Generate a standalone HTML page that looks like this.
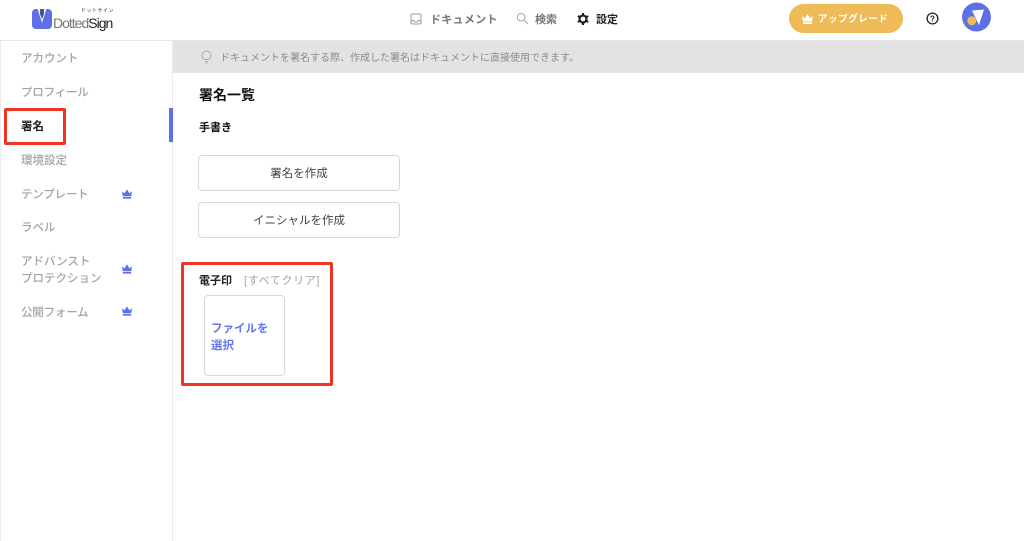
<!DOCTYPE html>
<html lang="ja">
<head>
<meta charset="utf-8">
<style>
html,body{margin:0;padding:0;background:#fff}
body{width:1024px;height:541px;overflow:hidden;position:relative;font-family:"Liberation Sans","Noto Sans CJK JP",sans-serif;color:#222;filter:blur(.35px)}
.a{position:absolute;white-space:nowrap}
.nav{font-size:11.5px;line-height:14px;color:#a3a3a3;left:21px;letter-spacing:0;font-weight:500}
.btn{position:absolute;left:198px;width:200px;height:34px;border:1px solid #d8d8d8;border-radius:4px;text-align:center;font-size:11.5px;line-height:36px;color:#444;background:#fff}
.red{position:absolute;border:3px solid #ee3524;border-radius:2px;box-sizing:border-box}
</style>
</head>
<body>
<div class="a" style="left:0;top:40px;width:1024px;height:1px;background:#e8e8e8"></div>
<div class="a" style="left:0;top:41px;width:1px;height:500px;background:#ececec"></div>
<div class="a" style="left:172px;top:41px;width:1px;height:500px;background:#ececec"></div>
<div class="a" style="left:173px;top:41px;width:851px;height:32px;background:#e3e3e3"></div>

<svg class="a" style="left:32px;top:9px" width="20" height="20" viewBox="0 0 20 20">
<rect x="0" y="0" width="20" height="20" rx="4" fill="#5f6fe6"/>
<path d="M5.500 0L10 14L14.500 0Z" fill="#e9edf8"/>
<path d="M8 0h4v5l-2 5-2-5z" fill="#4a5690"/>
</svg>
<div class="a" style="left:53px;top:15px;font-size:14px;line-height:17px;letter-spacing:-1px;color:#777;font-weight:400">Dotted<span style="color:#222">Sign</span></div>
<div class="a" style="left:81px;top:8px;font-size:5px;line-height:7px;letter-spacing:.5px;color:#333">ドットサイン</div>

<svg class="a" style="left:410px;top:13px" width="12" height="12" viewBox="0 0 12 12" fill="none" stroke="#999" stroke-width="1"><rect x="1" y="1" width="10" height="10" rx="1.500"/><path d="M1 7.500h2.800c.4 1.200 1.200 1.500 2.200 1.500s1.800-.3 2.200-1.500H11"/></svg>
<div class="a" style="left:430px;top:13px;font-size:11px;line-height:14px;color:#777;font-weight:700;letter-spacing:.3px">ドキュメント</div>
<svg class="a" style="left:516px;top:12px" width="13" height="13" viewBox="0 0 13 13" fill="none" stroke="#aaa" stroke-width="1.100"><circle cx="5.200" cy="5.200" r="3.800"/><path d="M8 8l4 4"/></svg>
<div class="a" style="left:535px;top:13px;font-size:11px;line-height:14px;color:#777;font-weight:700">検索</div>
<svg class="a" style="left:577px;top:13px" width="12" height="12" viewBox="0 0 12 12"><circle cx="6" cy="6" r="3.500" fill="none" stroke="#222" stroke-width="2.200"/><g stroke="#222" stroke-width="2"><path d="M6 0v2M6 10v2M.8 3l1.700 1M9.500 8l1.700 1M.8 9l1.700-1M9.500 4l1.700-1"/></g></svg>
<div class="a" style="left:596px;top:13px;font-size:11px;line-height:14px;color:#222;font-weight:700">設定</div>

<div class="a" style="left:789px;top:4px;width:114px;height:29px;border-radius:15px;background:#eebb58"></div>
<svg class="a" style="left:801px;top:14px" width="13" height="10" viewBox="0 0 13 10"><path d="M1 2l2.800 2.300L6.500 0l2.700 4.300L12 2l-1 5.500H2z M2 8.300h9V10H2z" fill="#fff"/></svg>
<div class="a" style="left:818px;top:13px;font-size:9.500px;line-height:13px;color:#fff;font-weight:700;letter-spacing:.55px">アップグレード</div>
<svg class="a" style="left:926px;top:12px" width="13" height="13" viewBox="0 0 13 13"><circle cx="6.500" cy="6.500" r="5.400" fill="none" stroke="#222" stroke-width="1.300"/><text x="6.500" y="9.400" text-anchor="middle" font-size="8" font-weight="700" font-family="Liberation Sans" fill="#222">?</text></svg>
<svg class="a" style="left:961px;top:2px" width="30" height="30" viewBox="0 0 30 30"><circle cx="15.500" cy="15" r="14.500" fill="#5e71e4"/><path d="M11 8.500L23 7.500L18 23Z" fill="#fff"/><circle cx="10.800" cy="18.800" r="4.500" fill="#eebb58"/></svg>

<div class="a nav" style="top:52px">アカウント</div>
<div class="a nav" style="top:86px;letter-spacing:-.2px">プロフィール</div>
<div class="a nav" style="top:120px;color:#222;font-weight:700">署名</div>
<div class="a nav" style="top:154px">環境設定</div>
<div class="a nav" style="top:188px;letter-spacing:-.2px">テンプレート</div>
<div class="a nav" style="top:221px">ラベル</div>
<div class="a nav" style="top:254px;line-height:17px">アドバンスト<br>プロテクション</div>
<div class="a nav" style="top:306px;letter-spacing:-.2px">公開フォーム</div>
<svg class="a" style="left:121px;top:189px" width="12" height="10" viewBox="0 0 13 10"><path d="M1 2l2.800 2.300L6.500 0l2.700 4.300L12 2l-1 5.500H2z M2 8.300h9V10H2z" fill="#5f6fe6"/></svg>
<svg class="a" style="left:121px;top:264px" width="12" height="10" viewBox="0 0 13 10"><path d="M1 2l2.800 2.300L6.500 0l2.700 4.300L12 2l-1 5.500H2z M2 8.300h9V10H2z" fill="#5f6fe6"/></svg>
<svg class="a" style="left:121px;top:306px" width="12" height="10" viewBox="0 0 13 10"><path d="M1 2l2.800 2.300L6.500 0l2.700 4.300L12 2l-1 5.500H2z M2 8.300h9V10H2z" fill="#5f6fe6"/></svg>
<div class="a" style="left:169px;top:108px;width:4px;height:34px;background:#5f6fe6"></div>
<div class="red" style="left:4px;top:108px;width:62px;height:37px"></div>

<svg class="a" style="left:201px;top:50px" width="11" height="14" viewBox="0 0 11 14" fill="none" stroke="#aaa" stroke-width="1"><path d="M3.500 9.500C2 8.500 1 7.200 1 5.500a4.500 4.500 0 0 1 9 0c0 1.700-1 3-2.500 4z"/><path d="M4 11.500h3M4.500 13h2"/></svg>
<div class="a" style="left:220px;top:52px;font-size:10px;line-height:14px;color:#8c8c8c;letter-spacing:0">ドキュメントを署名する際、作成した署名はドキュメントに直接使用できます。</div>
<div class="a" style="left:199px;top:86px;font-size:14px;line-height:19px;color:#111;font-weight:700">署名一覧</div>
<div class="a" style="left:199px;top:121px;font-size:11px;line-height:15px;color:#111;font-weight:700">手書き</div>
<div class="btn" style="top:155px">署名を作成</div>
<div class="btn" style="top:202px">イニシャルを作成</div>

<div class="red" style="left:181px;top:262px;width:152px;height:124px"></div>
<div class="a" style="left:199px;top:274px;font-size:11px;line-height:15px;color:#222;font-weight:700">電子印</div>
<div class="a" style="left:244px;top:274px;font-size:11px;line-height:15px;color:#a3a3a3;letter-spacing:.65px">[すべてクリア]</div>
<div class="a" style="left:204px;top:295px;width:79px;height:79px;border:1px solid #d8d8d8;border-radius:4px"></div>
<div class="a" style="left:211px;top:321px;font-size:11.500px;line-height:17px;color:#6677ee;font-weight:700">ファイルを<br>選択</div>
</body>
</html>
